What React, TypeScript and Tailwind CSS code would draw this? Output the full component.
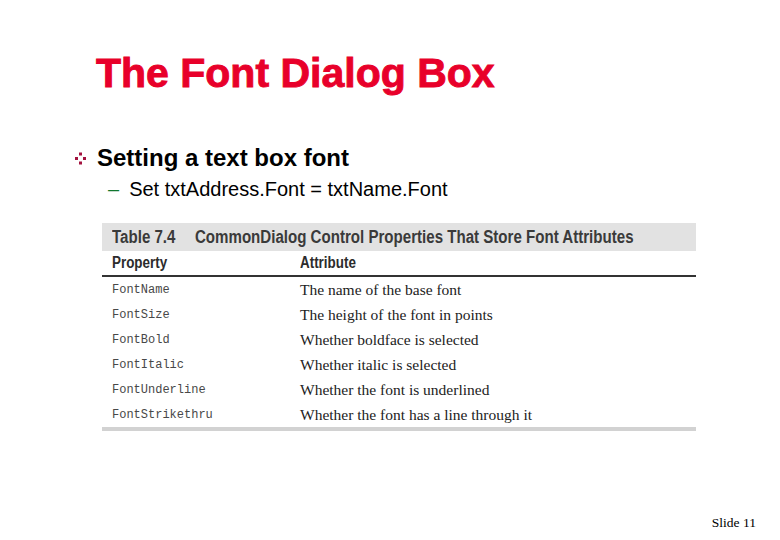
import React from "react";

const rows: [string, string][] = [
  ["FontName", "The name of the base font"],
  ["FontSize", "The height of the font in points"],
  ["FontBold", "Whether boldface is selected"],
  ["FontItalic", "Whether italic is selected"],
  ["FontUnderline", "Whether the font is underlined"],
  ["FontStrikethru", "Whether the font has a line through it"],
];

export default function App() {
  return (
    <div className="w-[780px] h-[540px] bg-white flex flex-col font-['Liberation_Sans',Arial,sans-serif] text-black">
      <h1 className="ml-[96px] mt-[53px] text-[41px] leading-none font-bold text-[#e8002a] [-webkit-text-stroke:0.9px_#e8002a]">
        The Font Dialog Box
      </h1>

      <div className="mt-[52px] ml-[74px] flex items-center">
        <svg width="13" height="13" viewBox="0 0 13 13" className="mr-[10px] mt-[1px]">
          <rect x="5" y="0.5" width="3" height="3" fill="#a3123f" />
          <rect x="1" y="5" width="3" height="3" fill="#a3123f" />
          <rect x="9" y="5" width="3" height="3" fill="#a3123f" />
          <rect x="5" y="9.5" width="3" height="3" fill="#a3123f" />
        </svg>
        <span className="text-[24px] leading-none font-bold">Setting a text box font</span>
      </div>

      <div className="mt-[9px] ml-[108px] flex items-center text-[20px] leading-none">
        <span className="text-[#11772d] mr-[10px]">–</span>
        <span>Set txtAddress.Font = txtName.Font</span>
      </div>

      <div className="mt-[24px] ml-[102px] w-[594px] flex flex-col">
        <div className="h-[28px] bg-[#e2e2e2] flex items-center pl-[10px] text-[18px] leading-none font-bold text-[#3a3a3a] whitespace-nowrap">
          <span className="inline-block origin-left scale-x-[0.838]">
            <span className="inline-block w-[99px]">Table 7.4</span>
            <span>CommonDialog Control Properties That Store Font Attributes</span>
          </span>
        </div>
        <div className="h-[24px] flex items-center text-[16px] leading-none font-bold text-[#2c2c2c] whitespace-nowrap">
          <span className="w-[198px] pl-[10px]">
            <span className="inline-block origin-left scale-x-[0.838]">Property</span>
          </span>
          <span className="inline-block origin-left scale-x-[0.838]">Attribute</span>
        </div>
        <div className="h-[2px] bg-[#333333]" />
        {rows.map(([p, a]) => (
          <div key={p} className="h-[25px] flex items-center">
            <span className="w-[198px] pl-[10px] font-['Liberation_Mono',monospace] text-[12px] text-[#484848]">{p}</span>
            <span className="font-['Liberation_Serif',serif] text-[15.5px] text-[#222222]">{a}</span>
          </div>
        ))}
        <div className="h-[4px] bg-[#d2d2d2]" />
      </div>

      <div className="mt-auto mb-[11px] mr-[24px] self-end font-['Liberation_Serif',serif] text-[13.5px] leading-none">
        Slide 11
      </div>
    </div>
  );
}
